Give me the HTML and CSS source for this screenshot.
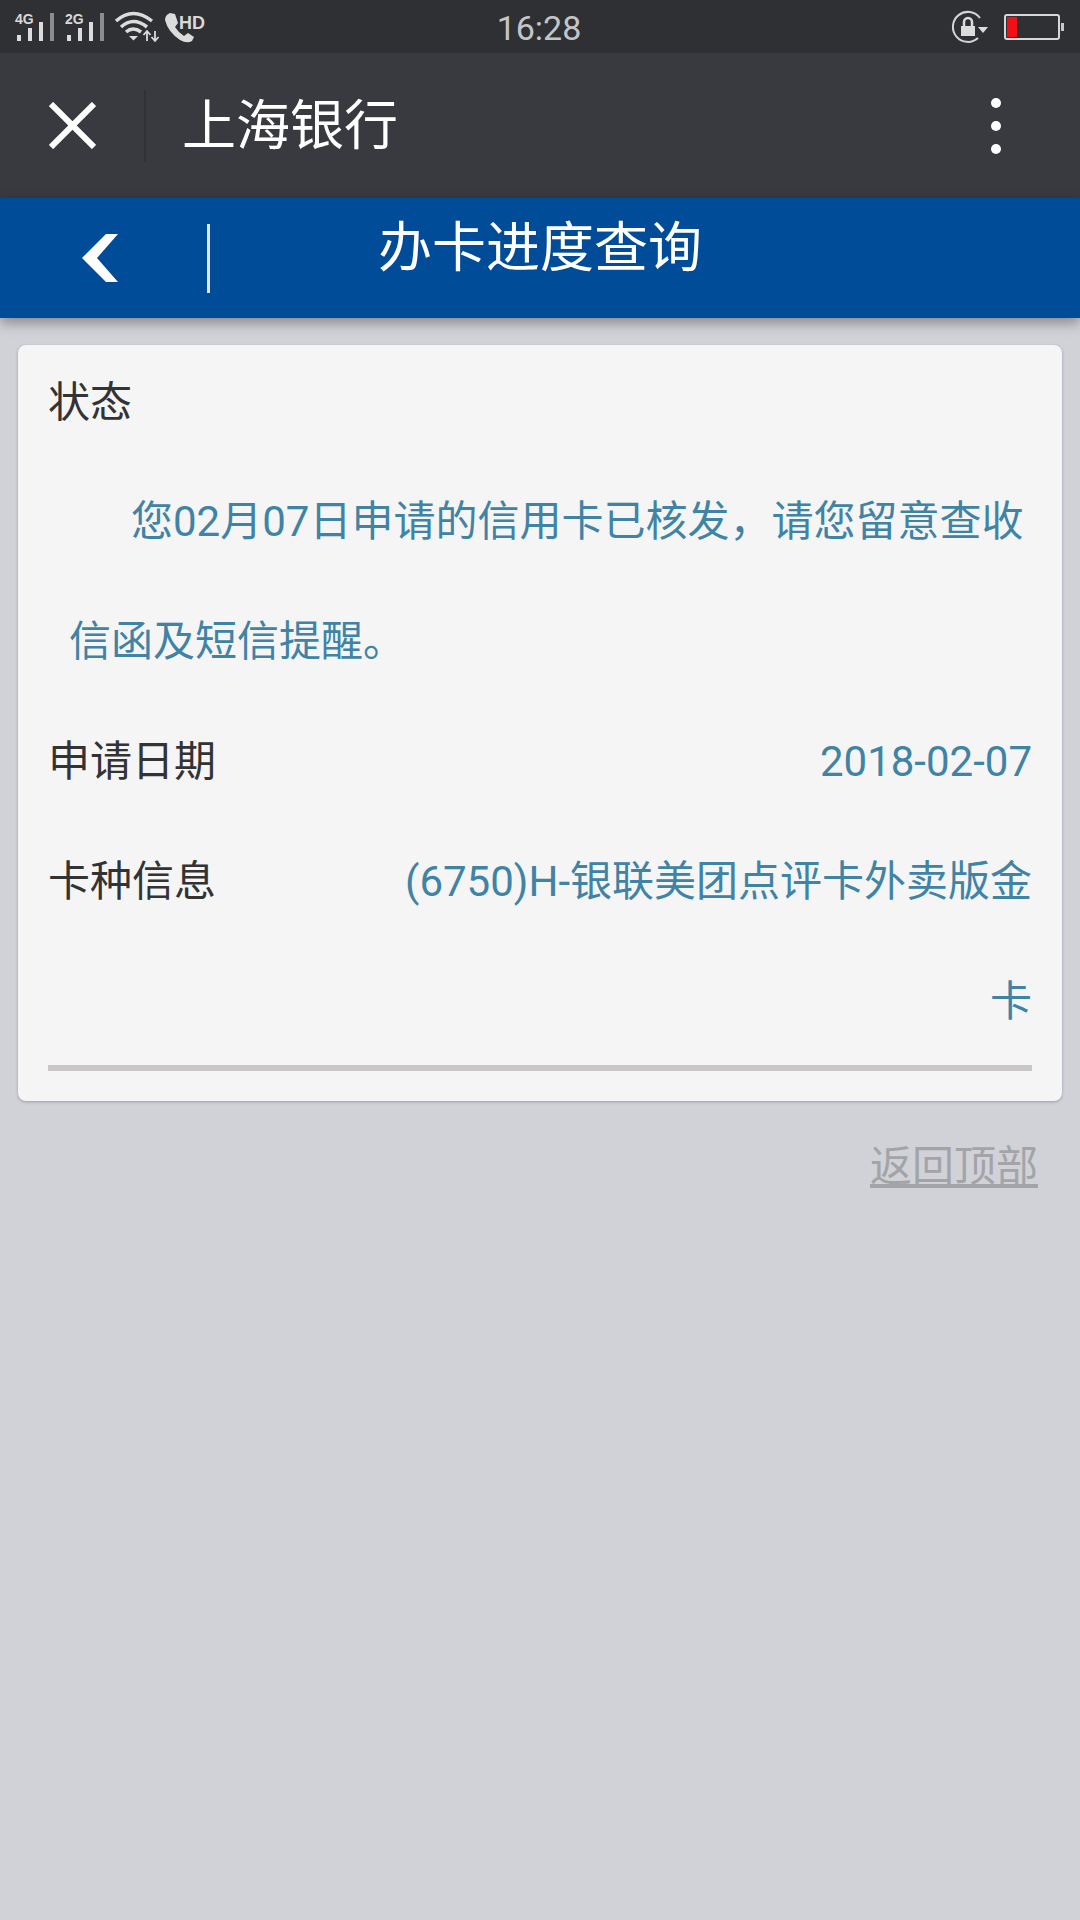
FILE: index.html
```html
<!DOCTYPE html>
<html lang="zh-CN">
<head>
<meta charset="utf-8">
<title>办卡进度查询</title>
<link rel="stylesheet" href="styles.css">
</head>
<body>
<div class="statusbar">
  <svg class="status-left" width="220" height="53" viewBox="0 0 220 53">
    <g class="sb-text"><text x="15" y="24">4G</text><text x="65" y="24">2G</text></g>
    <g class="sb-on">
      <rect x="17" y="35" width="4" height="6"/><rect x="28" y="28" width="4" height="13"/><rect x="39" y="22" width="4" height="19"/>
      <rect x="67" y="35" width="4" height="6"/><rect x="78" y="28" width="4" height="13"/><rect x="89" y="22" width="4" height="19"/>
    </g>
    <g class="sb-off"><rect x="50" y="13" width="4" height="28"/><rect x="100" y="13" width="4" height="28"/></g>
    <g class="sb-wifi">
      <path d="M116 21 Q133 6 152 21"/><path d="M121 27 Q133 16 147 27"/><path d="M126 32 Q133 26 141 32"/>
    </g>
    <path class="sb-on" d="M129 36 L138 36 L133.500 40.500 Z"/>
    <path class="sb-arrow" d="M147 41 V32 M143.500 35 L147 31 L150.500 35 M155 31 V40 M151.500 37 L155 41 L158.500 37"/>
    <path class="sb-on" d="M170 13 L175 14 L178 23 L175 27 Q178 32 184 36 L188 33 L194 37 L192 41 Q187 44 180 40 Q168 32 165 20 Q165 15 170 13 Z"/>
    <text class="sb-hd" x="179" y="29">HD</text>
  </svg>
  <div class="clock">16:28</div>
  <svg class="status-right" width="124" height="53" viewBox="0 0 124 53">
    <path class="sb-ring" d="M 38 38 A 15 15 0 1 1 40 18"/>
    <path class="sb-on" d="M38 27 L48 27 L43 33 Z"/>
    <rect class="sb-on" x="21" y="26" width="14" height="10"/>
    <path class="sb-shackle" d="M24 26 V22 A4 4 0 0 1 32 22 V26"/>
    <rect class="batt" x="65" y="15" width="54" height="24" rx="2"/>
    <rect class="batt-level" x="67" y="17" width="10" height="20"/>
    <rect class="batt-tip" x="121" y="23" width="3" height="8"/>
  </svg>
</div>

<header class="titlebar">
  <div class="close">
    <svg width="47" height="47" viewBox="0 0 47 47"><path d="M2 2 L45 45 M45 2 L2 45"/></svg>
  </div>
  <span class="title-sep"></span>
  <h1 class="app-title">上海银行</h1>
  <div class="more"><i></i><i></i><i></i></div>
</header>

<nav class="navbar">
  <div class="nav-left">
    <svg class="back" width="36" height="48" viewBox="0 0 36 48"><path d="M24 0 H36 L15 24 L36 48 H24 L0 24 Z"/></svg>
    <span class="nav-sep"></span>
  </div>
  <h2 class="page-title">办卡进度查询</h2>
  <div></div>
</nav>

<main class="card">
  <div class="status-row">状态</div>
  <p class="message">您02月07日申请的信用卡已核发，请您留意查收信函及短信提醒。</p>
  <div class="row"><span class="label">申请日期</span><span class="value">2018-02-07</span></div>
  <div class="row"><span class="label">卡种信息</span><span class="value wrap">(6750)H-银联美团点评卡外卖版金卡</span></div>
  <div class="divider"></div>
</main>

<div class="foot"><a class="to-top" href="#">返回顶部</a></div>
</body>
</html>
```

FILE: styles.css
```css
* { box-sizing: border-box; }
html, body { margin: 0; padding: 0; }
body {
  width: 1080px;
  height: 1920px;
  overflow: hidden;
  background: #d1d2d7;
  font-family: Roboto, "Noto Sans CJK SC", sans-serif;
  font-size: 42px;
  color: #333;
}
.statusbar {
  height: 53px;
  background: #2f3034;
  display: grid;
  grid-template-columns: 1fr auto 1fr;
  align-items: center;
}
.status-left { display: block; }
.status-right { display: block; justify-self: end; margin-right: 16px; }
.clock { font-size: 34px; color: #c4c5c6; line-height: 56px; height: 53px; margin-right: 2px; }
.sb-text text, .sb-hd {
  font-family: "Liberation Sans", sans-serif;
  font-size: 14px;
  font-weight: 700;
  fill: #d8d8d8;
}
.sb-hd { font-size: 18px; }
.sb-on { fill: #dcdcdc; }
.sb-off { fill: #8b8c8e; }
.sb-wifi path { fill: none; stroke: #dcdcdc; stroke-width: 3.500; }
.sb-arrow { fill: none; stroke: #dcdcdc; stroke-width: 1.800; }
.sb-ring { fill: none; stroke: #d4d4d4; stroke-width: 2; }
.sb-shackle { fill: none; stroke: #dcdcdc; stroke-width: 2.500; }
.batt { fill: none; stroke: #d8d8d8; stroke-width: 2; }
.batt-level { fill: #f40f14; }
.batt-tip { fill: #c8c8c8; }

.titlebar {
  height: 145px;
  background: #393a40;
  display: flex;
  align-items: center;
  color: #fff;
}
.close { width: 144px; padding-left: 49px; display: flex; align-items: center; }
.close svg { display: block; }
.close path { stroke: #fff; stroke-width: 6; fill: none; }
.title-sep { width: 2px; height: 72px; background: #303136; }
.app-title { margin: 0 0 0 36px; font-size: 54px; font-weight: 400; line-height: 76px; padding-top: 2px; }
.more {
  margin-left: auto;
  margin-right: 79px;
  display: flex;
  flex-direction: column;
  gap: 13px;
}
.more i { display: block; width: 10px; height: 10px; border-radius: 50%; background: #fff; }

.navbar {
  height: 120px;
  background: #004c99;
  display: grid;
  grid-template-columns: 1fr auto 1fr;
  box-shadow: 0 5px 12px rgba(0, 0, 0, .35);
  position: relative;
}
.nav-left { display: flex; align-items: flex-start; padding-left: 82px; }
.back { margin-top: 36px; display: block; fill: #fff; }
.nav-sep { width: 3px; height: 69px; margin: 26px 0 0 89px; background: #dbe8f5; }
.page-title {
  margin: 0;
  font-size: 54px;
  font-weight: 400;
  line-height: 102px;
  color: #fff;
}

.card {
  margin: 27px 18px 0;
  height: 756px;
  padding: 0 30px 0;
  background: #f5f5f6;
  border-radius: 8px;
  box-shadow: 0 1px 3px rgba(120, 120, 135, .6);
}
.status-row { height: 117px; line-height: 116px; }
.message {
  margin: 0;
  padding: 0 0 0 21px;
  line-height: 120px;
  text-indent: 62px;
  color: #3f83a5;
}
.row { display: flex; justify-content: space-between; line-height: 120px; }
.label { flex: none; }
.value { color: #3f83a5; text-align: right; }
.value.wrap { width: 640px; }
.divider { height: 6px; margin-top: 3px; background: #cbc7c9; }

.foot { display: flex; justify-content: flex-end; padding: 36px 42px 0 0; }
.to-top { font-size: 42px; line-height: 60px; color: #a3a4a8; text-decoration: underline; }
```
